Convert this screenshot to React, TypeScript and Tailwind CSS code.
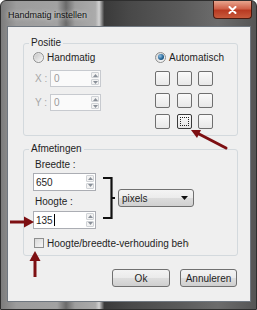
import React from "react";

function Radio({ checked }: { checked?: boolean }) {
  return (
    <span className="relative flex h-[11px] w-[11px] items-center justify-center rounded-full border border-[#8e8f8f] bg-[linear-gradient(135deg,#d6d6d6,#fbfbfb)]">
      {checked ? (
        <span className="h-[6px] w-[6px] rounded-full bg-[radial-gradient(circle_at_35%_35%,#8fc0e6,#1f5f8f_60%,#163f66)]" />
      ) : (
        <span className="h-[7px] w-[7px] rounded-full bg-[linear-gradient(135deg,#c8c8c8,#f2f2f2)]" />
      )}
    </span>
  );
}

function SpinButtons() {
  return (
    <div className="my-[1px] mr-[1px] flex w-[8px] flex-col gap-[1px]">
      <div className="flex flex-1 items-center justify-center rounded-[1px] border border-[#cfd2d6] bg-[#f3f3f3]">
        <svg width="5" height="3" viewBox="0 0 5 3">
          <path d="M0 3 L2.5 0 L5 3Z" fill="#8a9099" />
        </svg>
      </div>
      <div className="flex flex-1 items-center justify-center rounded-[1px] border border-[#cfd2d6] bg-[#f3f3f3]">
        <svg width="5" height="3" viewBox="0 0 5 3">
          <path d="M0 0 L2.5 3 L5 0Z" fill="#8a9099" />
        </svg>
      </div>
    </div>
  );
}

function Square({ selected }: { selected?: boolean }) {
  return (
    <div
      className={
        selected
          ? "flex h-[15px] w-[15px] items-center justify-center rounded-[2px] border border-[#3a3a3a] bg-[linear-gradient(180deg,#fafafa,#e6e6e6)]"
          : "h-[15px] w-[15px] rounded-[2px] border border-[#6f6f6f] bg-[linear-gradient(180deg,#fafafa,#e8e8e8)]"
      }
    >
      {selected ? <div className="h-[9px] w-[9px] border border-dotted border-[#222]" /> : null}
    </div>
  );
}

export default function App() {
  return (
    <div className="relative h-[310px] w-[257px] overflow-hidden font-['Liberation_Sans',Arial,sans-serif] text-[10px] text-[#1e1e1e]">
      <div className="flex h-full flex-col rounded-t-[6px] border border-[#2e2e2e] bg-[linear-gradient(90deg,#7c7c7c_0%,#9c9c9c_6%,#a2a2a2_22%,#6a6a6a_25.5%,#9e9e9e_29%,#ababab_37%,#d2d2d2_38.5%,#3a3a3a_40.5%,#484848_50%,#5a5a5a_70%,#6c6c6c_85%,#555555_100%)]">
        <div className="flex h-[25px] items-start justify-between">
          <div className="pl-[7px] pt-[7px] text-[9px] leading-[14px] text-[#111] [text-shadow:0_0_5px_rgba(255,255,255,0.9)]">
            Handmatig instellen
          </div>
          <div className="mr-[4px] flex h-[18px] w-[39px] items-center justify-center rounded-b-[4px] border border-t-0 border-[#4a1a10] bg-[linear-gradient(180deg,#e8a58e_0%,#d0624a_45%,#b83a22_55%,#c85a3c_100%)]">
            <svg width="9" height="8" viewBox="0 0 9 8">
              <path d="M1.5 1 L7.5 7 M7.5 1 L1.5 7" stroke="#fff" strokeWidth="2" strokeLinecap="round" />
            </svg>
          </div>
        </div>
        <div className="mb-[7px] ml-[6px] mr-[5px] flex flex-1 flex-col border border-[#6f7780] bg-[#efefef] pl-[15px] pr-[12px]">
          {/* Positie */}
          <fieldset className="mt-[9px] rounded-[3px] border border-[#d3d9dd] pb-[6px] pl-[9px]">
            <legend className="ml-[-4px] px-[2px] leading-[14px]">Positie</legend>
            <div className="flex">
              <div className="flex w-[122px] flex-col">
                <div className="flex h-[14px] items-center gap-[3px]">
                  <Radio />
                  <span>Handmatig</span>
                </div>
                <div className="mt-[6px] flex items-center">
                  <span className="w-[17px] pl-[2px] text-[#a6a6a6]">X :</span>
                  <div className="flex h-[17px] w-[51px] border border-[#c7cacf] bg-[#fafafa]">
                    <div className="flex flex-1 items-center pl-[3px] text-[#9a9a9a]">0</div>
                    <SpinButtons />
                  </div>
                </div>
                <div className="mt-[7px] flex items-center">
                  <span className="w-[17px] pl-[2px] text-[#a6a6a6]">Y :</span>
                  <div className="flex h-[17px] w-[51px] border border-[#c7cacf] bg-[#fafafa]">
                    <div className="flex flex-1 items-center pl-[3px] text-[#9a9a9a]">0</div>
                    <SpinButtons />
                  </div>
                </div>
              </div>
              <div className="flex flex-col">
                <div className="flex h-[14px] items-center gap-[3px]">
                  <Radio checked />
                  <span>Automatisch</span>
                </div>
                <div className="mt-[7px] grid grid-cols-[15px_15px_15px] gap-x-[6.5px] gap-y-[6.5px]">
                  <Square />
                  <Square />
                  <Square />
                  <Square />
                  <Square />
                  <Square />
                  <Square />
                  <Square selected />
                  <Square />
                </div>
              </div>
            </div>
          </fieldset>

          {/* Afmetingen */}
          <fieldset className="mt-[6px] rounded-[3px] border border-[#d3d9dd] pb-[6px] pl-[9px]">
            <legend className="ml-[-4px] px-[2px] leading-[14px]">Afmetingen</legend>
            <div className="flex">
              <div className="flex w-[63px] flex-col">
                <span className="mt-[2px] pl-[2px] leading-[14px]">Breedte :</span>
                <div className="mt-[1px] flex h-[18px] w-[63px] border border-[#abadb3] bg-white">
                  <div className="flex flex-1 items-center pl-[2px]">650</div>
                  <SpinButtons />
                </div>
                <span className="mt-[4px] pl-[2px] leading-[14px]">Hoogte :</span>
                <div className="mt-[2px] flex h-[18px] w-[63px] border border-[#abadb3] bg-white">
                  <div className="flex flex-1 items-center pl-[2px]">
                    135
                    <span className="ml-[1px] h-[12px] w-px bg-black" />
                  </div>
                  <SpinButtons />
                </div>
              </div>
              <svg className="ml-[7px] shrink-0" width="13" height="72" viewBox="0 0 13 72">
                <path d="M0 22 H8.5 V62 H0 M8.5 42 H12" stroke="#111" strokeWidth="2.2" fill="none" />
              </svg>
              <div className="ml-[2px] mt-[33px] flex h-[18px] w-[76px] items-center justify-between rounded-[3px] border border-[#707070] bg-[linear-gradient(180deg,#f4f4f4_0%,#ececec_48%,#dcdcdc_52%,#d0d0d0_100%)] pl-[3px] pr-[5px]">
                <span>pixels</span>
                <svg width="7" height="4" viewBox="0 0 7 4">
                  <path d="M0 0 H7 L3.5 4Z" fill="#111" />
                </svg>
              </div>
            </div>
            <div className="mt-[8px] flex h-[12px] items-center gap-[3px] pl-[1px]">
              <span className="h-[10px] w-[10px] border border-[#8e8f8f] bg-[linear-gradient(135deg,#d8d8d8,#f6f6f6)]" />
              <span className="w-[142px] overflow-hidden whitespace-nowrap">Hoogte/breedte-verhouding behouden</span>
            </div>
          </fieldset>

          {/* Buttons */}
          <div className="mt-[13px] flex justify-end gap-[10px] pr-[1px]">
            <div className="flex h-[18px] w-[58px] items-center justify-center rounded-[3px] border border-[#707070] bg-[linear-gradient(180deg,#f3f3f3_0%,#ebebeb_48%,#dddddd_52%,#cfcfcf_100%)]">
              Ok
            </div>
            <div className="flex h-[18px] w-[57px] items-center justify-center rounded-[3px] border border-[#707070] bg-[linear-gradient(180deg,#f3f3f3_0%,#ebebeb_48%,#dddddd_52%,#cfcfcf_100%)]">
              Annuleren
            </div>
          </div>
        </div>
      </div>

      {/* red arrows drawn over the dialog */}
      <svg className="pointer-events-none absolute inset-0" width="257" height="310" viewBox="0 0 257 310">
        <g fill="#7d0f12" stroke="#7d0f12">
          <path d="M226 148 L199 134" strokeWidth="3" strokeLinecap="round" fill="none" />
          <path d="M191 130 L201 130 L197 138Z" stroke="none" />
          <path d="M10 222 L25 222" strokeWidth="3" fill="none" />
          <path d="M34 222 L24 216.5 L24 227.5Z" stroke="none" />
          <path d="M35 277 L35 260" strokeWidth="3" fill="none" />
          <path d="M35 251 L29.5 261 L40.5 261Z" stroke="none" />
        </g>
      </svg>
    </div>
  );
}
